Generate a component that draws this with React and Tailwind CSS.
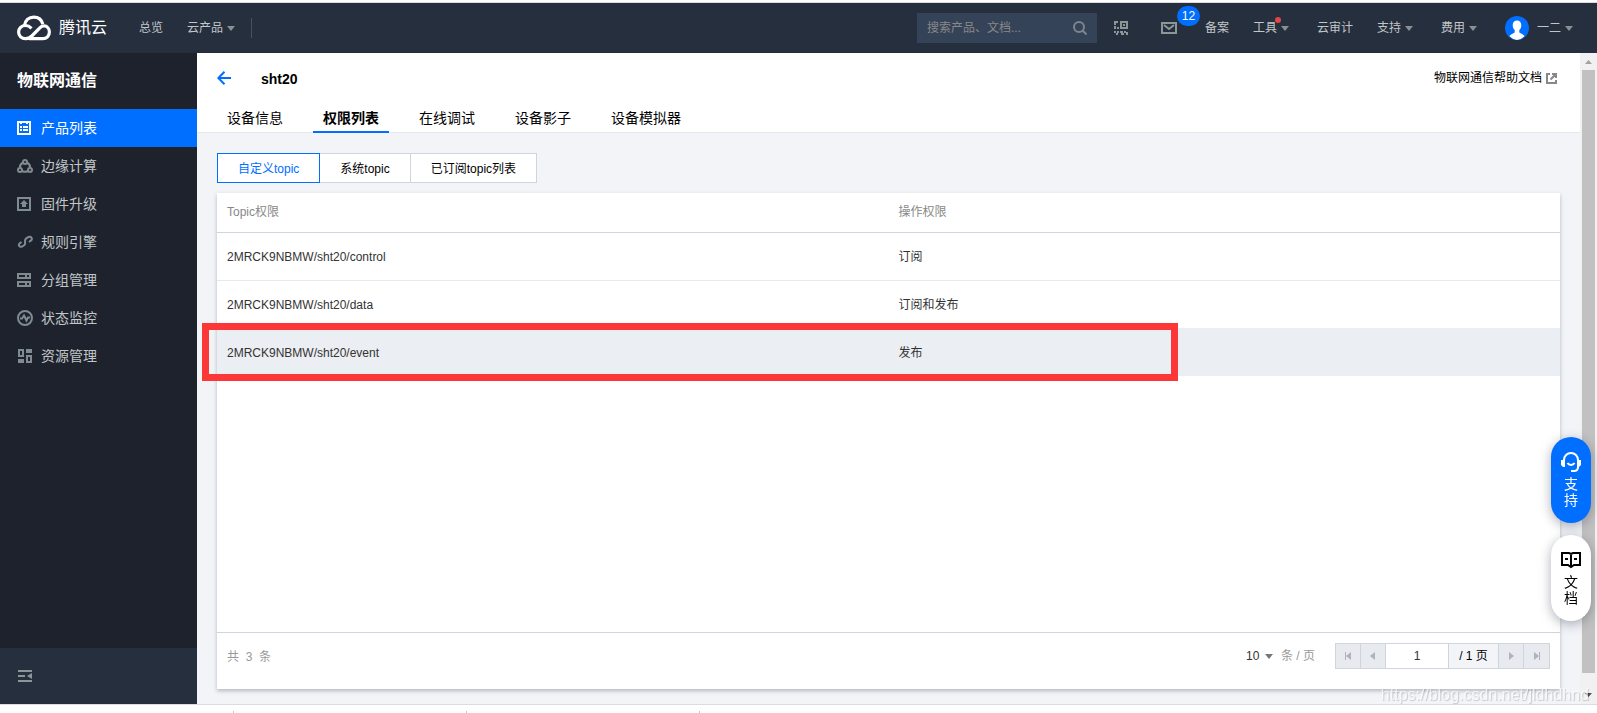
const menuItems = [
  { key: 'products', label: '产品列表', icon: ListIcon, active: true },
  { key: 'edge', label: '边缘计算', icon: EdgeIcon },
  { key: 'firmware', label: '固件升级', icon: FirmwareIcon },
  { key: 'rules', label: '规则引擎', icon: RuleIcon },
  { key: 'groups', label: '分组管理', icon: GroupIcon },
  { key: 'status', label: '状态监控', icon: StatusIcon },
  { key: 'resources', label: '资源管理', icon: ResourceIcon },
];

const tabs = ['设备信息', '权限列表', '在线调试', '设备影子', '设备模拟器'];

const segments = ['自定义topic', '系统topic', '已订阅topic列表'];

const topics = [
  { topic: '2MRCK9NBMW/sht20/control', permission: '订阅' },
  { topic: '2MRCK9NBMW/sht20/data', permission: '订阅和发布' },
  { topic: '2MRCK9NBMW/sht20/event', permission: '发布' },
];

function Caret({ className = '' }) {
  return (
    <svg width="8" height="5" viewBox="0 0 8 5" className={className} fill="currentColor" aria-hidden="true">
      <path d="M0 0h8L4 5z" />
    </svg>
  );
}

function Logo() {
  return (
    <svg width="34" height="26" viewBox="0 0 34 26" fill="none" stroke="#fff" strokeWidth="3.2" aria-hidden="true">
      <path d="M7.5 10.4C8.3 5.2 12 2.1 16.7 2.1c4.600 0 8 2.700 9.100 7" />
      <path d="M14.500 13.300C12.700 11.500 10.900 10.500 8.500 10.500c-3.900 0-6.900 2.900-6.900 6.600s3 6.600 6.900 6.600c2.500 0 4.300-.8 6.300-2.700l8.300-8.300c1.300-1.300 2.500-1.800 3.900-1.800 3.100 0 5.400 2.700 5.400 6.200 0 3.700-2.800 6.600-6.400 6.600H12" />
    </svg>
  );
}

function ListIcon() {
  return (
    <svg width="14" height="14" viewBox="0 0 14 14" fill="currentColor" aria-hidden="true">
      <path fillRule="evenodd" d="M0 0h14v14H0zM2 2v10h10V2h-1v1H9V2H5v1H3V2z" />
      <path d="M3 5h2v2H3zM6 5h5v2H6zM3 8h2v2H3zM6 8h5v2H6z" />
    </svg>
  );
}

function EdgeIcon() {
  return (
    <svg width="16" height="14" viewBox="0 0 16 14" fill="none" stroke="currentColor" strokeWidth="2" aria-hidden="true">
      <circle cx="8" cy="3" r="2" />
      <circle cx="3" cy="11" r="2" />
      <circle cx="13" cy="11" r="2" />
      <path d="M6 3.500C3.800 4.700 2.800 6.500 2.800 9M10 3.500c2.200 1.200 3.200 3 3.200 5.500M5 12c2 1 4 1 6 0" />
    </svg>
  );
}

function FirmwareIcon() {
  return (
    <svg width="14" height="14" viewBox="0 0 14 14" fill="currentColor" aria-hidden="true">
      <path fillRule="evenodd" d="M0 0h14v14H0zM2 2v10h10V2z" />
      <path d="M7 3l4 4H9v3H5V7H3z" />
    </svg>
  );
}

function RuleIcon() {
  return (
    <svg width="16" height="14" viewBox="0 0 16 14" fill="none" stroke="currentColor" strokeWidth="2" aria-hidden="true">
      <path d="M4.500 7L2.500 8.500C1 10.500 2.500 12.500 5 11.600L7.500 10c1-1 .5-2 .5-4 0-1 0-1.500 1-2.400L11.500 2C14 1 15.500 3 14.500 5L12 7" />
    </svg>
  );
}

function GroupIcon() {
  return (
    <svg width="14" height="14" viewBox="0 0 14 14" fill="currentColor" aria-hidden="true">
      <path fillRule="evenodd" d="M0 0h14v6H0zM2 2v2h6V2zM10 2v2h2V2zM0 8h14v6H0zM2 10v2h6v-2zM10 10v2h2v-2z" />
    </svg>
  );
}

function StatusIcon() {
  return (
    <svg width="16" height="16" viewBox="0 0 16 16" fill="none" stroke="currentColor" strokeWidth="2" aria-hidden="true">
      <circle cx="8" cy="8" r="7" />
      <path d="M3 8.500h2L7 5.500l2.500 5L11 7.500h2" />
    </svg>
  );
}

function ResourceIcon() {
  return (
    <svg width="16" height="14" viewBox="0 0 16 14" fill="currentColor" aria-hidden="true">
      <path fillRule="evenodd" d="M1 0h6v8H1zM3 2v4h2V2zM9 6h6v8H9zM11 8v4h2V8z" />
      <path d="M9 0h6v4H9zM1 10h6v4H1z" />
    </svg>
  );
}

function NavLink({ children, caret, dot }) {
  return (
    <a href="#" className={`flex items-center ${caret ? 'mr-1' : ''}`}>
      <span className="relative">
        {children}
        {dot && <span className="absolute -right-1 -top-[2px] size-[6px] rounded-full bg-[#e54545]" />}
      </span>
      {caret && <Caret className="ml-1 text-[#8a8f94]" />}
    </a>
  );
}

function Header() {
  return (
    <header className="flex h-[50px] shrink-0 items-center bg-[#262f3e] pl-[17px] pr-5 text-[12px] text-[#c1c6c8]">
      <a href="#" className="flex items-center gap-2 text-[16px] text-white">
        <Logo />
        腾讯云
      </a>
      <nav className="ml-8 flex items-center gap-6">
        <NavLink>总览</NavLink>
        <NavLink caret>云产品</NavLink>
      </nav>
      <span className="ml-3 h-5 w-px bg-[#47505e]" />

      <div className="ml-auto flex h-[30px] w-[180px] items-center bg-[#354359] px-[10px]">
        <input
          type="text"
          aria-label="搜索"
          placeholder="搜索产品、文档..."
          className="min-w-0 flex-1 bg-transparent text-[12px] outline-none placeholder:text-[#888]"
        />
        <button type="button" aria-label="搜索" className="text-[#7b868c]">
          <svg width="14" height="14" viewBox="0 0 14 14" fill="none" stroke="currentColor" strokeWidth="2" aria-hidden="true">
            <circle cx="6" cy="6" r="5" />
            <path d="M9.500 9.500l4 4" />
          </svg>
        </button>
      </div>
      <button type="button" aria-label="小程序" className="ml-[17px] text-[#8b9699]">
        <svg width="14" height="14" viewBox="0 0 14 14" fill="currentColor" aria-hidden="true">
          <path fillRule="evenodd" d="M6 0h8v8H6zM8 2v4h4V2z" />
          <path d="M9 3h2v2H9zM0 0h4v2H2v2H0zM0 5h2v3H0zM3 6h2v2H3zM0 10h2v2H0zM3 10h2v2H3zM2 12h2v2H2zM6 10h3v2H6zM7 12h3v2H7zM10 10h2v2h-2zM12 11h2v3h-2z" />
        </svg>
      </button>
      <button type="button" aria-label="消息" className="relative ml-[33px] mr-7 text-[#8b9699]">
        <svg width="16" height="12" viewBox="0 0 16 12" fill="none" stroke="currentColor" strokeWidth="2" aria-hidden="true">
          <path d="M1 1h14v10H1zM3 3l5 4 5-4" />
        </svg>
        <span className="absolute -top-4 left-4 flex h-5 w-[23px] items-center justify-center rounded-full bg-[#006eff] text-[12px] text-white">
          12
        </span>
      </button>
      <nav className="flex items-center gap-6">
        <NavLink>备案</NavLink>
        <NavLink caret dot>工具</NavLink>
        <NavLink>云审计</NavLink>
        <NavLink caret>支持</NavLink>
        <NavLink caret>费用</NavLink>
        <div className="flex items-center gap-2">
          <svg width="24" height="24" viewBox="0 0 24 24" aria-hidden="true">
            <circle cx="12" cy="12" r="12" fill="#006eff" />
            <path
              d="M12 4.500c2.700 0 4.300 1.900 4.300 4.700 0 2-.8 3.800-2 4.900v2.200c0 1 4.200 1.700 5.200 4A12 12 0 0 1 12 24a12 12 0 0 1-7.500-3.700c1-2.300 5.200-3 5.200-4v-2.200c-1.200-1.100-2-2.900-2-4.900 0-2.800 1.600-4.700 4.300-4.700z"
              fill="#fff"
            />
          </svg>
          <NavLink caret>一二</NavLink>
        </div>
      </nav>
    </header>
  );
}

function Sidebar() {
  return (
    <aside className="flex w-[197px] shrink-0 flex-col bg-[#1e222d]">
      <h2 className="flex h-14 items-center px-[17px] text-[16px] font-bold text-white">物联网通信</h2>
      <nav className="flex-1">
        {menuItems.map(({ key, label, icon: Icon, active }) => (
          <a
            key={key}
            href="#"
            className={`flex h-[38px] items-center gap-2 pl-[17px] text-[14px] ${
              active ? 'bg-[#006eff] text-white' : 'text-[#c1c6c8]'
            }`}
          >
            <span className={`flex w-4 ${active ? '' : 'text-[#7f8b91]'}`}>
              <Icon />
            </span>
            {label}
          </a>
        ))}
      </nav>
      <div className="flex h-14 items-center bg-[#262f3e] pl-[18px]">
        <button type="button" aria-label="收起菜单" className="text-[#8b9699]">
          <svg width="14" height="12" viewBox="0 0 14 12" fill="currentColor" aria-hidden="true">
            <path d="M0 0h14v2H0zM0 5h7v2H0zM0 10h14v2H0zM14 3v6L9 6z" />
          </svg>
        </button>
      </div>
    </aside>
  );
}

function PageHead() {
  return (
    <div className="border-b border-[#e5e8ed] bg-white px-5">
      <div className="flex h-[50px] items-center">
        <button type="button" aria-label="返回" className="text-[#006eff]">
          <svg width="14" height="14" viewBox="0 0 14 14" fill="none" stroke="currentColor" strokeWidth="2" aria-hidden="true">
            <path d="M7.500 .7L1.300 7l6.200 6.300M1.500 7H14" />
          </svg>
        </button>
        <h1 className="ml-[30px] pt-[2px] text-[14px] font-bold text-black">sht20</h1>
        <a href="#" className="ml-auto mr-[3px] flex items-center gap-1 text-[12px] text-black">
          物联网通信帮助文档
          <svg width="11" height="11" viewBox="0 0 11 11" fill="none" stroke="#888" strokeWidth="2" aria-hidden="true">
            <path d="M4 1H1v9h9V7M6 1h4v4M10 1L4.500 6.500" />
          </svg>
        </a>
      </div>
      <div className="flex gap-5">
        {tabs.map((tab) => (
          <button
            key={tab}
            type="button"
            className={`-mb-px h-[30px] border-b-2 px-[10px] pt-[2px] text-[14px] text-black ${
              tab === '权限列表' ? 'border-[#006eff] font-bold' : 'border-transparent'
            }`}
          >
            {tab}
          </button>
        ))}
      </div>
    </div>
  );
}

function Pager() {
  const side = 'flex w-[25px] items-center justify-center bg-[#e7eaef] text-[#b0b4ba]';
  return (
    <div className="flex h-[57px] items-start border-t border-[#cfd5de] px-[10px] pt-[10px] text-[12px]">
      <span className="flex h-[26px] items-center whitespace-pre pt-[2px] text-[#999]">共  3  条</span>
      <div className="ml-auto flex h-[26px] items-center text-[#999]">
        <label className="flex items-center gap-2">
          <span className="relative flex items-center">
            <select defaultValue="10" aria-label="每页条数" className="w-[27px] appearance-none bg-transparent text-[#333] outline-none">
              <option>10</option>
              <option>20</option>
            </select>
            <Caret className="pointer-events-none absolute right-0 text-[#777]" />
          </span>
          条 / 页
        </label>
      </div>
      <div className="ml-5 flex h-[26px] divide-x divide-[#cfd5de] border border-[#cfd5de]">
        <button type="button" aria-label="首页" className={side}>
          <svg width="8" height="8" viewBox="0 0 8 8" fill="currentColor" aria-hidden="true">
            <path d="M1 0h1v8H1zM7 0v8L2 4z" />
          </svg>
        </button>
        <button type="button" aria-label="上一页" className={side}>
          <svg width="8" height="8" viewBox="0 0 8 8" fill="currentColor" aria-hidden="true">
            <path d="M6 0v8L1 4z" />
          </svg>
        </button>
        <input type="text" aria-label="页码" defaultValue="1" className="w-[63px] bg-white text-center text-[#333] outline-none" />
        <span className="flex w-[50px] items-center justify-center bg-[#f3f4f8] text-black">/ 1 页</span>
        <button type="button" aria-label="下一页" className={side}>
          <svg width="8" height="8" viewBox="0 0 8 8" fill="currentColor" aria-hidden="true">
            <path d="M2 0v8l5-4z" />
          </svg>
        </button>
        <button type="button" aria-label="末页" className={side}>
          <svg width="8" height="8" viewBox="0 0 8 8" fill="currentColor" aria-hidden="true">
            <path d="M6 0h1v8H6zM1 0v8l5-4z" />
          </svg>
        </button>
      </div>
    </div>
  );
}

function TopicCard() {
  return (
    <section className="relative mt-[10px] flex flex-1 flex-col bg-white text-[12px] text-[#333] shadow-[0_2px_4px_rgba(54,58,80,0.32)]">
      <table className="w-full table-fixed border-collapse text-left">
        <thead>
          <tr className="h-[39px] border-b border-[#cfd5de] text-[#888]">
            <th className="px-[10px] font-normal">Topic权限</th>
            <th className="px-[10px] font-normal">操作权限</th>
          </tr>
        </thead>
        <tbody>
          {topics.map((row, index) => (
            <tr
              key={row.topic}
              className={`h-12 ${index === 2 ? 'bg-[#ebeef2]' : ''} ${index === 0 ? 'border-b border-[#e5e8ed]' : ''}`}
            >
              <td className="px-[10px] pt-[2px]">{row.topic}</td>
              <td className="px-[10px] pt-[2px]">{row.permission}</td>
            </tr>
          ))}
        </tbody>
      </table>
      <div className="flex-1" />
      <Pager />
      {/* Marco rojo sobre la fila del evento */}
      <div className="pointer-events-none absolute -left-[15px] top-[130px] h-[58px] w-[976px] border-7 border-[#fc3737]" />
    </section>
  );
}

function Scrollbar() {
  return (
    <div className="flex w-[17px] shrink-0 flex-col items-center bg-[#f1f1f1]" aria-hidden="true">
      <div className="flex h-[17px] items-center">
        <svg width="7" height="4" viewBox="0 0 7 4" fill="#a3a3a3">
          <path d="M0 4h7L3.500 0z" />
        </svg>
      </div>
      <div className="w-[13px] flex-1 bg-[#c1c1c1]" />
      <div className="flex h-[31px] items-end pb-[7px]">
        <svg width="7" height="4" viewBox="0 0 7 4" fill="#505050">
          <path d="M0 0h7L3.500 4z" />
        </svg>
      </div>
    </div>
  );
}

function FloatingButtons() {
  const pill =
    'flex h-[86px] w-10 flex-col items-center rounded-full pt-[15px] text-[14px] leading-4 shadow-[0_3px_12px_rgba(54,58,80,0.4)]';
  return (
    <div className="fixed bottom-[92px] right-[6px] flex flex-col gap-3">
      <button type="button" className={`${pill} bg-[#006eff] text-white`}>
        <svg width="20" height="20" viewBox="0 0 20 20" fill="none" stroke="currentColor" strokeWidth="2" aria-hidden="true">
          <path d="M3 9V8a7 7 0 0 1 14 0v7c0 2.500-1.500 4-4 4h-3M6.500 11c1.500 2.500 5.500 2.500 7 0" />
          <path d="M0 8h4v7H2L0 13zM16 8h4v5l-2 2h-2z" fill="currentColor" stroke="none" />
        </svg>
        <span className="mt-1 w-[14px]">支持</span>
      </button>
      <button type="button" className={`${pill} bg-white text-black`}>
        <svg width="20" height="20" viewBox="0 0 20 20" fill="none" stroke="currentColor" strokeWidth="2" aria-hidden="true">
          <path d="M1 3h7l2 1 2-1h7v12h-6l-3 2-3-2H1zM10 4v13M4 9h3M13 9h3" />
        </svg>
        <span className="mt-1 w-[14px]">文档</span>
      </button>
    </div>
  );
}

export default function App() {
  return (
    <div className="flex h-screen flex-col overflow-hidden bg-white pt-[2px] font-['Liberation_Sans','Noto_Sans_CJK_SC',sans-serif]">
      <div className="flex min-h-0 flex-1 flex-col border-y border-[#dadce0]">
        <Header />
        <div className="flex min-h-0 flex-1">
          <Sidebar />
          <main className="flex min-w-0 flex-1 flex-col bg-[#f2f4f8]">
            <PageHead />
            <div className="flex flex-1 flex-col px-5 pb-[15px] pt-5">
              <div className="flex h-[30px] text-[12px]">
                {segments.map((label, index) => (
                  <button
                    key={label}
                    type="button"
                    className={`border bg-white px-5 pt-[2px] ${
                      index === 0 ? 'border-[#006eff] text-[#006eff]' : 'border-[#cfd5de] text-black'
                    } ${index === 1 ? 'border-l-0' : ''} ${index === 2 ? '-ml-px' : ''}`}
                  >
                    {label}
                  </button>
                ))}
              </div>
              <TopicCard />
            </div>
          </main>
          <Scrollbar />
        </div>
      </div>
      <div className="flex h-2 items-end" aria-hidden="true">
        <span className="h-[2px] w-[234px] border-r border-[#c8c8c8]" />
        <span className="h-[2px] w-[233px] border-r border-[#c8c8c8]" />
        <span className="h-[2px] w-[233px] border-r border-[#c8c8c8]" />
      </div>
      <FloatingButtons />
      <div className="pointer-events-none fixed bottom-[6px] right-2 text-[16px] text-white/70 [text-shadow:1px_1px_1px_rgba(0,0,0,0.18)]">
        https://blog.csdn.net/jldhdhnd
      </div>
    </div>
  );
}
